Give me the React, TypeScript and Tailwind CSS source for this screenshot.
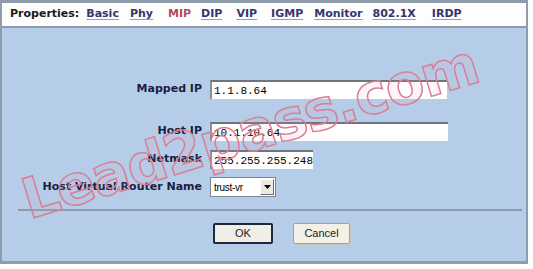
import React from "react";

const tabs = [
  { label: "Basic", cls: "ml-[7px]" },
  { label: "Phy", cls: "ml-[11px]" },
  { label: "MIP", cls: "ml-[15px]", active: true },
  { label: "DIP", cls: "ml-[10px]" },
  { label: "VIP", cls: "ml-[14px]" },
  { label: "IGMP", cls: "ml-[14px]" },
  { label: "Monitor", cls: "ml-[11px]" },
  { label: "802.1X", cls: "ml-[10px]" },
  { label: "IRDP", cls: "ml-[16px]" },
];

function Field({ label, children, className }: { label: string; children: React.ReactNode; className?: string }) {
  return (
    <div className={"flex items-center " + (className ?? "")}>
      <div className="w-[200px] text-right text-[11px] font-bold text-[#1c1c40]">{label}</div>
      <div className="ml-[8px]">{children}</div>
    </div>
  );
}

function TextBox({ value, w }: { value: string; w: string }) {
  return (
    <div
      className={
        "h-[19px] bg-white border-t-2 border-l-2 border-t-[#6f757d] border-l-[#8a9098] pl-[2px] pt-[1px] flex items-center font-['Liberation_Mono',monospace] text-[11px] text-black " +
        w
      }
    >
      {value}
    </div>
  );
}

export default function App() {
  return (
    <div className="w-[533px] h-[269px] bg-white font-['DejaVu_Sans',sans-serif] relative overflow-hidden">
      <div className="w-[528px] h-[264px] border-t-[3px] border-l-2 border-r-2 border-b-[3px] border-[#8e9cab] flex flex-col">
        <div className="h-[25px] bg-[#fdfdfd] border-b-2 border-[#8e9cab] flex items-center pl-2 text-[11px] font-bold">
          <span className="text-[#1a1a1a]">Properties:</span>
          {tabs.map((t) => (
            <span
              key={t.label}
              className={
                t.cls +
                (t.active
                  ? " text-[#b34b55]"
                  : " text-[#35356e] underline decoration-[#9a9ab8] underline-offset-2")
              }
            >
              {t.label}
            </span>
          ))}
        </div>
        <div className="flex-1 bg-[#b5cde9] flex flex-col pt-[52px]">
          <Field label="Mapped IP">
            <TextBox value="1.1.8.64" w="w-[237px]" />
          </Field>
          <Field label="Host IP" className="mt-[23px]">
            <TextBox value="10.1.10.64" w="w-[238px]" />
          </Field>
          <Field label="Netmask" className="mt-[9px]">
            <TextBox value="255.255.255.248" w="w-[103px]" />
          </Field>
          <Field label="Host Virtual Router Name" className="mt-[8px]">
            <div className="w-[66px] h-[20px] bg-white border border-[#7d8590] flex items-center">
              <span className="flex-1 pl-[3px] font-['Liberation_Sans',sans-serif] text-[10px] text-black tracking-[-0.3px]">trust-vr</span>
              <span className="w-[14px] h-[16px] mr-[1px] bg-[#ece9e2] border border-t-white border-l-white border-r-[#6e6e6e] border-b-[#6e6e6e] flex items-center justify-center">
                <svg width="7" height="4" viewBox="0 0 7 4">
                  <path d="M0 0H7L3.5 4Z" fill="#000" />
                </svg>
              </span>
            </div>
          </Field>
          <div className="mt-[12px] ml-4 mr-[4px] h-[2px] bg-[#8d9bad]" />
          <div className="mt-[12px] ml-[211px] flex gap-[20px]">
            <button className="w-[60px] h-[21px] bg-[#f1eee6] border-2 border-[#1e2a3a] rounded-[2px] font-['Liberation_Sans',sans-serif] text-[11px] text-[#222]">
              OK
            </button>
            <button className="w-[57px] h-[21px] bg-[#f3f0e8] border border-[#9aa3ad] rounded-[2px] shadow-[1px_1px_0_#c9c6bd] font-['Liberation_Sans',sans-serif] text-[11px] text-[#222]">
              Cancel
            </button>
          </div>
        </div>
      </div>
      <div className="absolute left-[250px] top-[132px] -translate-x-1/2 -translate-y-1/2 -rotate-[17deg] whitespace-nowrap font-['DejaVu_Sans',sans-serif] font-bold text-[56px] leading-none tracking-[-1px] text-[rgba(230,150,170,0.1)] [-webkit-text-stroke:1.5px_#d97f93] pointer-events-none">
        Lead2pass.com
      </div>
    </div>
  );
}
